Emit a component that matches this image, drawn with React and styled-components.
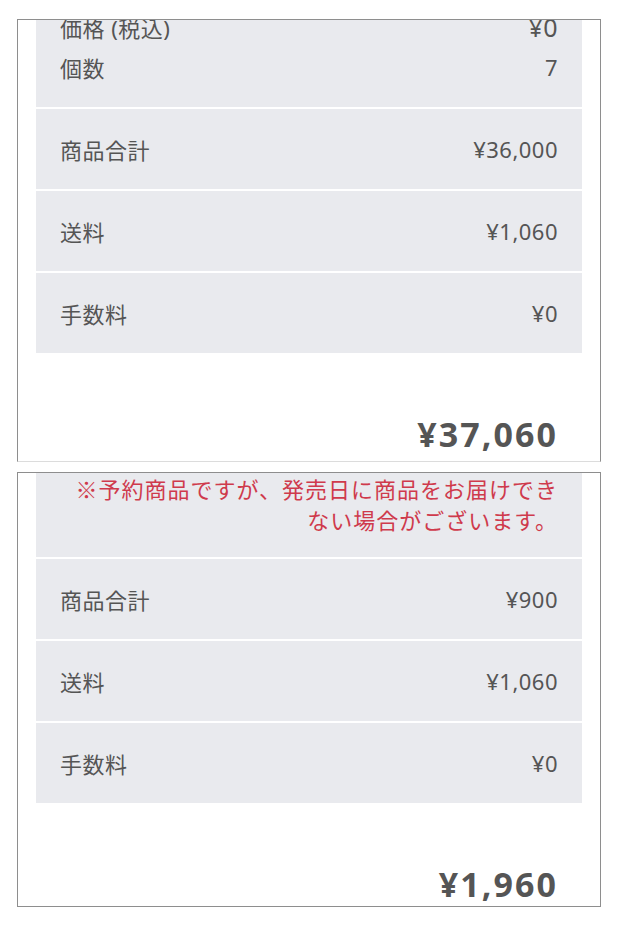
import React from "react";
import styled, { createGlobalStyle } from "styled-components";

const GlobalStyle = createGlobalStyle`
  html, body {
    margin: 0;
    padding: 0;
    background: #fff;
  }
  body {
    font-family: "Noto Sans", "Noto Sans CJK JP", sans-serif;
    color: #555;
    letter-spacing: 0.03em;
  }
`;

const Page = styled.div`
  display: flex;
  flex-direction: column;
  gap: 10px;
  padding: 19px 0 0 17px;
`;

// a clipped view of the order summary, scrolled by `offset`
const Viewport = styled.div`
  width: 582px;
  height: ${(props) => props.height}px;
  overflow: hidden;
  border: 1px solid #8e8e8e;
  border-bottom-color: ${(props) => props.bottomColor || "#8e8e8e"};
  background: #fff;
`;

const Content = styled.div`
  margin-top: ${(props) => -props.offset}px;
  padding: 0 18px;
`;

const GrayBox = styled.div`
  display: flex;
  flex-direction: column;
  gap: 2px;
  background: #fff;
`;

const Section = styled.div`
  background: #e9eaee;
  padding: 20px 24px 20px;
`;

const DetailRow = styled.div`
  display: flex;
  align-items: center;
  justify-content: space-between;
  height: 40px;
  font-size: 22px;
`;

const DetailValue = styled.span`
  font-size: ${(props) => (props.big ? "25px" : "22px")};
`;

const Note = styled.p`
  margin: 0;
  background: #e9eaee;
  padding: 20px 24px 22px;
  text-align: right;
  font-family: "Noto Sans CJK JP", sans-serif;
  font-size: 22px;
  line-height: 31px;
  letter-spacing: 1px;
  color: #cf3a4c;
`;

const SumRow = styled.div`
  display: flex;
  align-items: center;
  justify-content: space-between;
  height: 80px;
  padding: 0 24px;
  background: #e9eaee;
  font-size: 22px;
`;

const Total = styled.div`
  padding: 56px 24px 20px;
  text-align: right;
  font-size: 34px;
  line-height: 51px;
  font-weight: 700;
  letter-spacing: 0.06em;
  color: #555;
`;

const Summary = ({ rows }) => (
  <>
    {rows.map(([label, value]) => (
      <SumRow key={label}>
        <span>{label}</span>
        <span>{value}</span>
      </SumRow>
    ))}
  </>
);

const App = () => {
  return (
    <>
      <GlobalStyle />
      <Page>
        <Viewport height={441} bottomColor="#dcdcdc">
          <Content offset={33}>
            <GrayBox>
              <Section>
                <DetailRow>
                  <span>価格 (税込)</span>
                  <DetailValue big>¥0</DetailValue>
                </DetailRow>
                <DetailRow>
                  <span>個数</span>
                  <DetailValue>7</DetailValue>
                </DetailRow>
              </Section>
              <Summary
                rows={[
                  ["商品合計", "¥36,000"],
                  ["送料", "¥1,060"],
                  ["手数料", "¥0"],
                ]}
              />
            </GrayBox>
            <Total>¥37,060</Total>
          </Content>
        </Viewport>
        <Viewport height={433}>
          <Content offset={20}>
            <GrayBox>
              <Note>
                ※予約商品ですが、発売日に商品をお届けでき
                <br />
                ない場合がございます。
              </Note>
              <Summary
                rows={[
                  ["商品合計", "¥900"],
                  ["送料", "¥1,060"],
                  ["手数料", "¥0"],
                ]}
              />
            </GrayBox>
            <Total>¥1,960</Total>
          </Content>
        </Viewport>
      </Page>
    </>
  );
};

export default App;
